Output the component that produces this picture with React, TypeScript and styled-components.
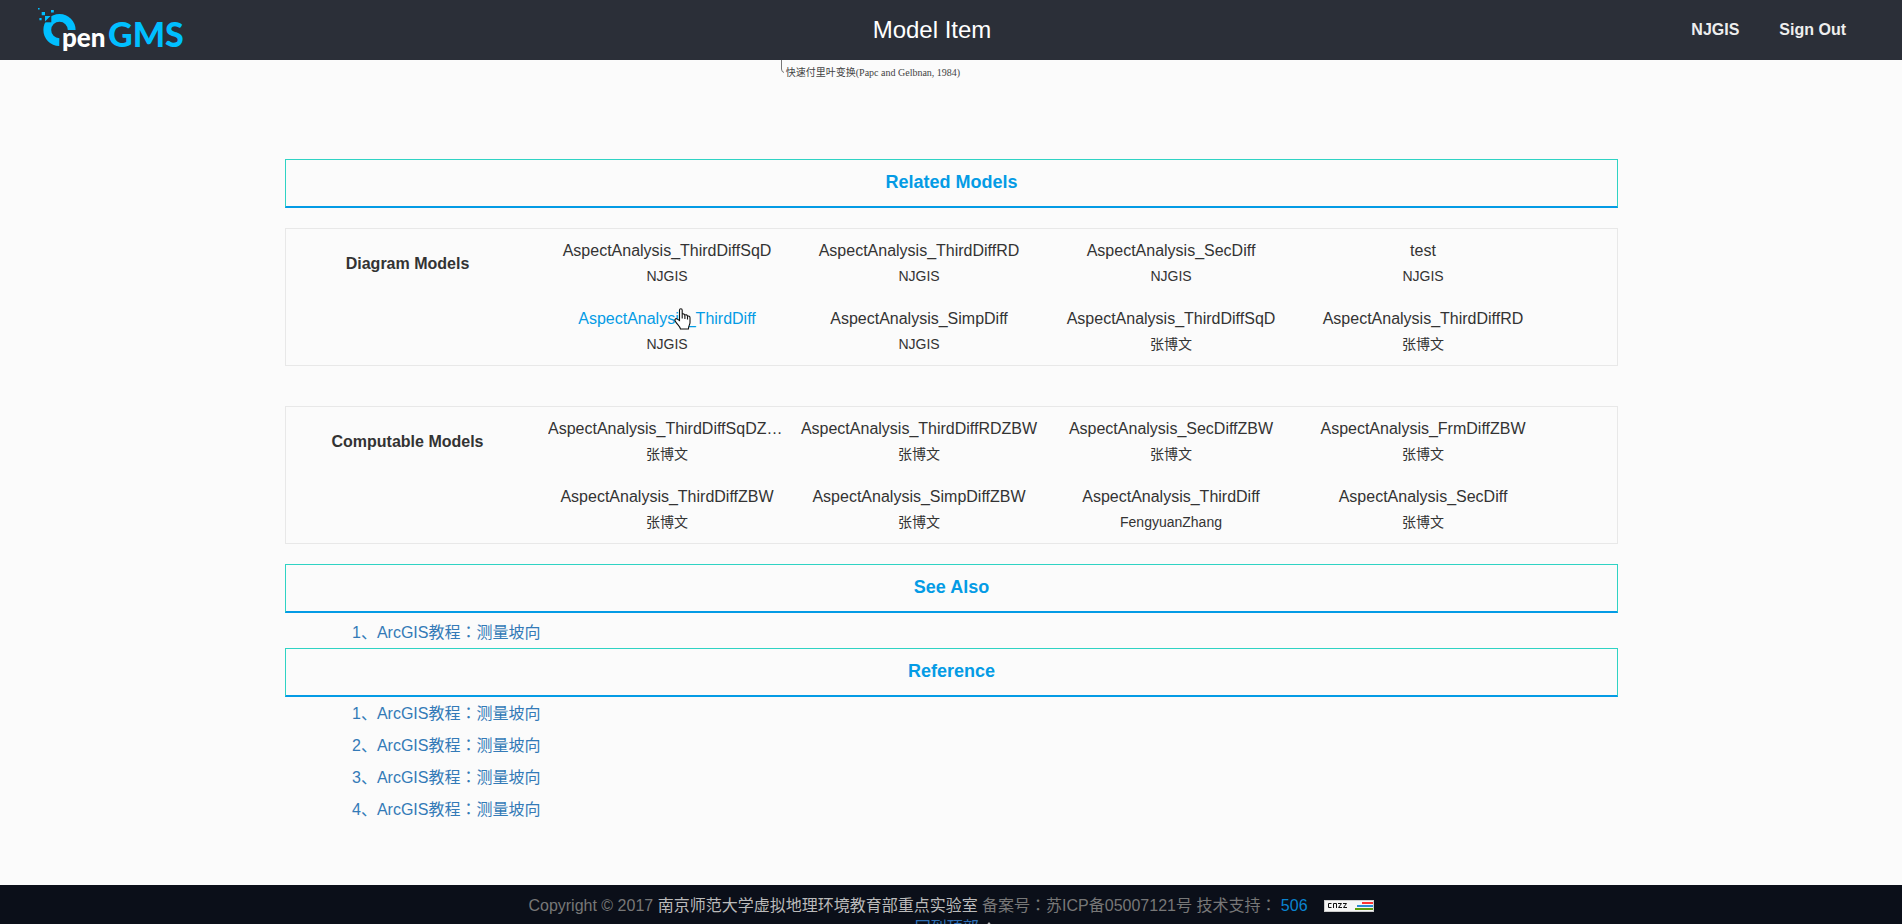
import React from "react";
import styled, { createGlobalStyle } from "styled-components";

const GlobalStyle = createGlobalStyle`
  *, *::before, *::after { box-sizing: border-box; }
  body {
    margin: 0;
    background: #fbfbfb;
    color: #333;
    font: 16px/24px "Liberation Sans", "Noto Sans CJK SC", sans-serif;
  }
  h1, h2, h3, p, ol, ul, figure { margin: 0; padding: 0; }
  ol, ul { list-style: none; }
  a { color: inherit; text-decoration: none; }
`;

const Page = styled.div`
  display: flex;
  flex-direction: column;
  height: 100vh;
  overflow: hidden;
`;

const Header = styled.header`
  display: grid;
  grid-template-columns: 1fr auto 1fr;
  align-items: center;
  flex: none;
  height: 60px;
  padding: 0 56px 0 18px;
  background: #2b2f38;
`;

const Brand = styled.a`
  display: block;
  width: 150px;
  height: 60px;
  margin-left: 20px;

  svg { display: block; }
`;

const PageTitle = styled.h1`
  color: #fff;
  font-size: 24px;
  font-weight: 400;
  line-height: 60px;
`;

const Nav = styled.nav`
  display: flex;
  justify-content: flex-end;
  gap: 40px;
  color: #eee;
  font-weight: 700;
  line-height: 60px;
`;

const Main = styled.main`
  flex: none;
  padding: 0 284px 60px 285px;
`;

const Figure = styled.figure`
  display: flex;
  justify-content: center;
  height: 99px;
  padding-right: 162px;
`;

const Caption = styled.figcaption`
  display: flex;
  color: #444;
  font: 10px/26px "Liberation Serif", "Noto Sans CJK SC", serif;

  svg { flex: none; }
`;

const SectionTitle = styled.h2`
  height: 49px;
  border: 1px solid #2fd3c4;
  border-bottom: 2px solid #049be5;
  color: #049be5;
  font-size: 18px;
  line-height: 44px;
  text-align: center;
`;

const Groups = styled.div`
  display: grid;
  gap: 40px;
  padding: 20px 0;
`;

const Group = styled.section`
  display: grid;
  grid-template-columns: minmax(0, 255fr) minmax(0, 1008fr) minmax(0, 68fr);
  border: 1px solid #e8e8e8;
`;

const GroupTitle = styled.h3`
  padding-right: 12px;
  font-size: 16px;
  line-height: 70px;
  text-align: center;
`;

const ModelGrid = styled.ul`
  display: grid;
  grid-template-columns: repeat(4, minmax(0, 1fr));
`;

const Model = styled.li`
  position: relative;
  height: 68px;
  padding: 8px 7px;
  text-align: center;
`;

const ModelName = styled.a<{ $active?: boolean }>`
  display: block;
  overflow: hidden;
  color: ${(p) => (p.$active ? "#049be5" : "#333")};
  line-height: 28px;
  text-overflow: ellipsis;
  white-space: nowrap;
`;

const Author = styled.p`
  font-size: 14px;
  line-height: 22px;
`;

const Pointer = styled.svg`
  position: absolute;
  top: 11px;
  left: calc(50% + 7px);
`;

const Links = styled.ol<{ $top: number }>`
  display: grid;
  gap: 2px;
  padding: ${(p) => p.$top}px 0 0 67px;
  color: #337ab7;
  font-family: "Liberation Sans", "Noto Sans CJK JP", sans-serif;
  line-height: 30px;
`;

const Footer = styled.footer`
  flex: none;
  padding-top: 10px;
  background: #0b0f19;
  color: #777;
  font-family: "Liberation Sans", "Noto Sans CJK JP", sans-serif;
  line-height: 22px;
  text-align: center;
`;

const FooterLine = styled.p`
  display: flex;
  justify-content: center;
  align-items: center;
  white-space: pre;
`;

const BackToTop = styled(FooterLine)`
  padding-left: 8px;
`;

const FooterLink = styled.a<{ $tone: string }>`
  color: ${(p) => p.$tone};
`;

const Badge = styled.svg`
  margin-left: 16px;
`;

type Entry = { name: string; author: string; active?: boolean };

const diagramModels: Entry[] = [
  { name: "AspectAnalysis_ThirdDiffSqD", author: "NJGIS" },
  { name: "AspectAnalysis_ThirdDiffRD", author: "NJGIS" },
  { name: "AspectAnalysis_SecDiff", author: "NJGIS" },
  { name: "test", author: "NJGIS" },
  { name: "AspectAnalysis_ThirdDiff", author: "NJGIS", active: true },
  { name: "AspectAnalysis_SimpDiff", author: "NJGIS" },
  { name: "AspectAnalysis_ThirdDiffSqD", author: "张博文" },
  { name: "AspectAnalysis_ThirdDiffRD", author: "张博文" },
];

const computableModels: Entry[] = [
  { name: "AspectAnalysis_ThirdDiffSqDZBW", author: "张博文" },
  { name: "AspectAnalysis_ThirdDiffRDZBW", author: "张博文" },
  { name: "AspectAnalysis_SecDiffZBW", author: "张博文" },
  { name: "AspectAnalysis_FrmDiffZBW", author: "张博文" },
  { name: "AspectAnalysis_ThirdDiffZBW", author: "张博文" },
  { name: "AspectAnalysis_SimpDiffZBW", author: "张博文" },
  { name: "AspectAnalysis_ThirdDiff", author: "FengyuanZhang" },
  { name: "AspectAnalysis_SecDiff", author: "张博文" },
];

const Logo = () => (
  <svg width="150" height="60" viewBox="38 0 150 60" role="img" aria-label="OpenGMS">
    <path d="M71.7 30A12.2 12.2 0 1 0 59.3 42.2" fill="none" stroke="#00bfff" strokeWidth="7.8" />
    <path d="M45 16h6.3v6.3H45z" fill="#2b2f38" />
    <path d="M45 16h5.5L45 21.5z" fill="#00bfff" />
    <path d="M38 8h1.6v1.6H38zM41.7 12h3.3v3.3h-3.3zM51 10h2.8v2.6H51zM39.4 18h2.2v2.2h-2.2z" fill="#00bfff" />
    <text x="62" y="47" fill="#fff" fontFamily="Lato, sans-serif" fontWeight="900" fontSize="26">pen</text>
    <text x="108" y="47" fill="#00bfff" fontFamily="Lato, sans-serif" fontWeight="900" fontSize="34">GMS</text>
  </svg>
);

const HandPointer = () => (
  <Pointer width="17" height="22" viewBox="0 0 17 22" aria-hidden="true">
    <path
      d="M5.5 12.5V2.2C5.5.2 8.2.2 8.2 2.2V6.6C8.8 5.5 10.8 5.8 10.9 7.2C11.7 6.4 13.4 6.8 13.5 8.3C14.6 7.6 16 8.2 16 9.7V14.5C16 16.5 14.6 17.5 14.4 21H6.5C6.2 18.5 3 16.5 1.3 13.2C.2 11.3 1.8 10 3.3 11.1Z"
      fill="#fff"
      stroke="#111"
      strokeWidth="1.1"
    />
    <path d="M8.2 6.5v4M10.9 7.5v3.5M13.5 8.5v3" stroke="#111" strokeWidth="1.1" />
  </Pointer>
);

const CnzzBadge = () => (
  <Badge width="50" height="12" viewBox="0 0 50 12" role="img" aria-label="CNZZ">
    <rect x=".5" y=".5" width="49" height="11" fill="#f6f6f6" stroke="#ccc" />
    <path
      d="M7.5 3.5H4.5V7.5H7.5M9.5 8V3.5H12.5V8M14 3.5H17.5L14.5 7.5H18M19 3.5H22.5L19.5 7.5H23"
      fill="none"
      stroke="#111"
    />
    <path d="M38 2h11v2H38z" fill="#f33" />
    <path d="M33 5h16v2H33z" fill="#2a8ad4" />
    <path d="M31 8h18v2H31z" fill="#5d9c0c" />
  </Badge>
);

const ModelGroup = ({ title, models }: { title: string; models: Entry[] }) => (
  <Group>
    <GroupTitle>{title}</GroupTitle>
    <ModelGrid>
      {models.map((m, i) => (
        <Model key={i}>
          <ModelName href="#" $active={m.active}>{m.name}</ModelName>
          <Author>{m.author}</Author>
          {m.active && <HandPointer />}
        </Model>
      ))}
    </ModelGrid>
  </Group>
);

const LinkList = ({ count, top }: { count: number; top: number }) => (
  <Links $top={top}>
    {Array.from({ length: count }, (_, i) => (
      <li key={i}>
        <a href="#">{`${i + 1}、ArcGIS教程：测量坡向`}</a>
      </li>
    ))}
  </Links>
);

export default function App() {
  return (
    <Page>
      <GlobalStyle />
      <Header>
        <Brand href="#"><Logo /></Brand>
        <PageTitle>Model Item</PageTitle>
        <Nav>
          <a href="#">NJGIS</a>
          <a href="#">Sign Out</a>
        </Nav>
      </Header>
      <Main>
        <Figure>
          <Caption>
            <svg width="5" height="14" aria-hidden="true">
              <path d="M.5 0V9Q.5 12 3 12.5" fill="none" stroke="#777" />
            </svg>
            快速付里叶变换(Papc and Gelbnan, 1984)
          </Caption>
        </Figure>
        <SectionTitle>Related Models</SectionTitle>
        <Groups>
          <ModelGroup title="Diagram Models" models={diagramModels} />
          <ModelGroup title="Computable Models" models={computableModels} />
        </Groups>
        <SectionTitle>See Also</SectionTitle>
        <LinkList count={1} top={5} />
        <SectionTitle>Reference</SectionTitle>
        <LinkList count={4} top={2} />
      </Main>
      <Footer>
        <FooterLine>
          <span>Copyright © 2017 </span>
          <FooterLink href="#" $tone="#bbb">南京师范大学虚拟地理环境教育部重点实验室</FooterLink>
          <span> 备案号：苏ICP备05007121号 技术支持： </span>
          <FooterLink href="#" $tone="#0a84d0">506</FooterLink>
          <CnzzBadge />
        </FooterLine>
        <BackToTop>
          <FooterLink href="#" $tone="#2f6fb5">回到顶部 </FooterLink>
          <svg width="12" height="14" viewBox="0 0 12 14" aria-hidden="true">
            <path d="M6 1l5 6H8v6H4V7H1z" fill="#bbb" />
          </svg>
        </BackToTop>
      </Footer>
    </Page>
  );
}
